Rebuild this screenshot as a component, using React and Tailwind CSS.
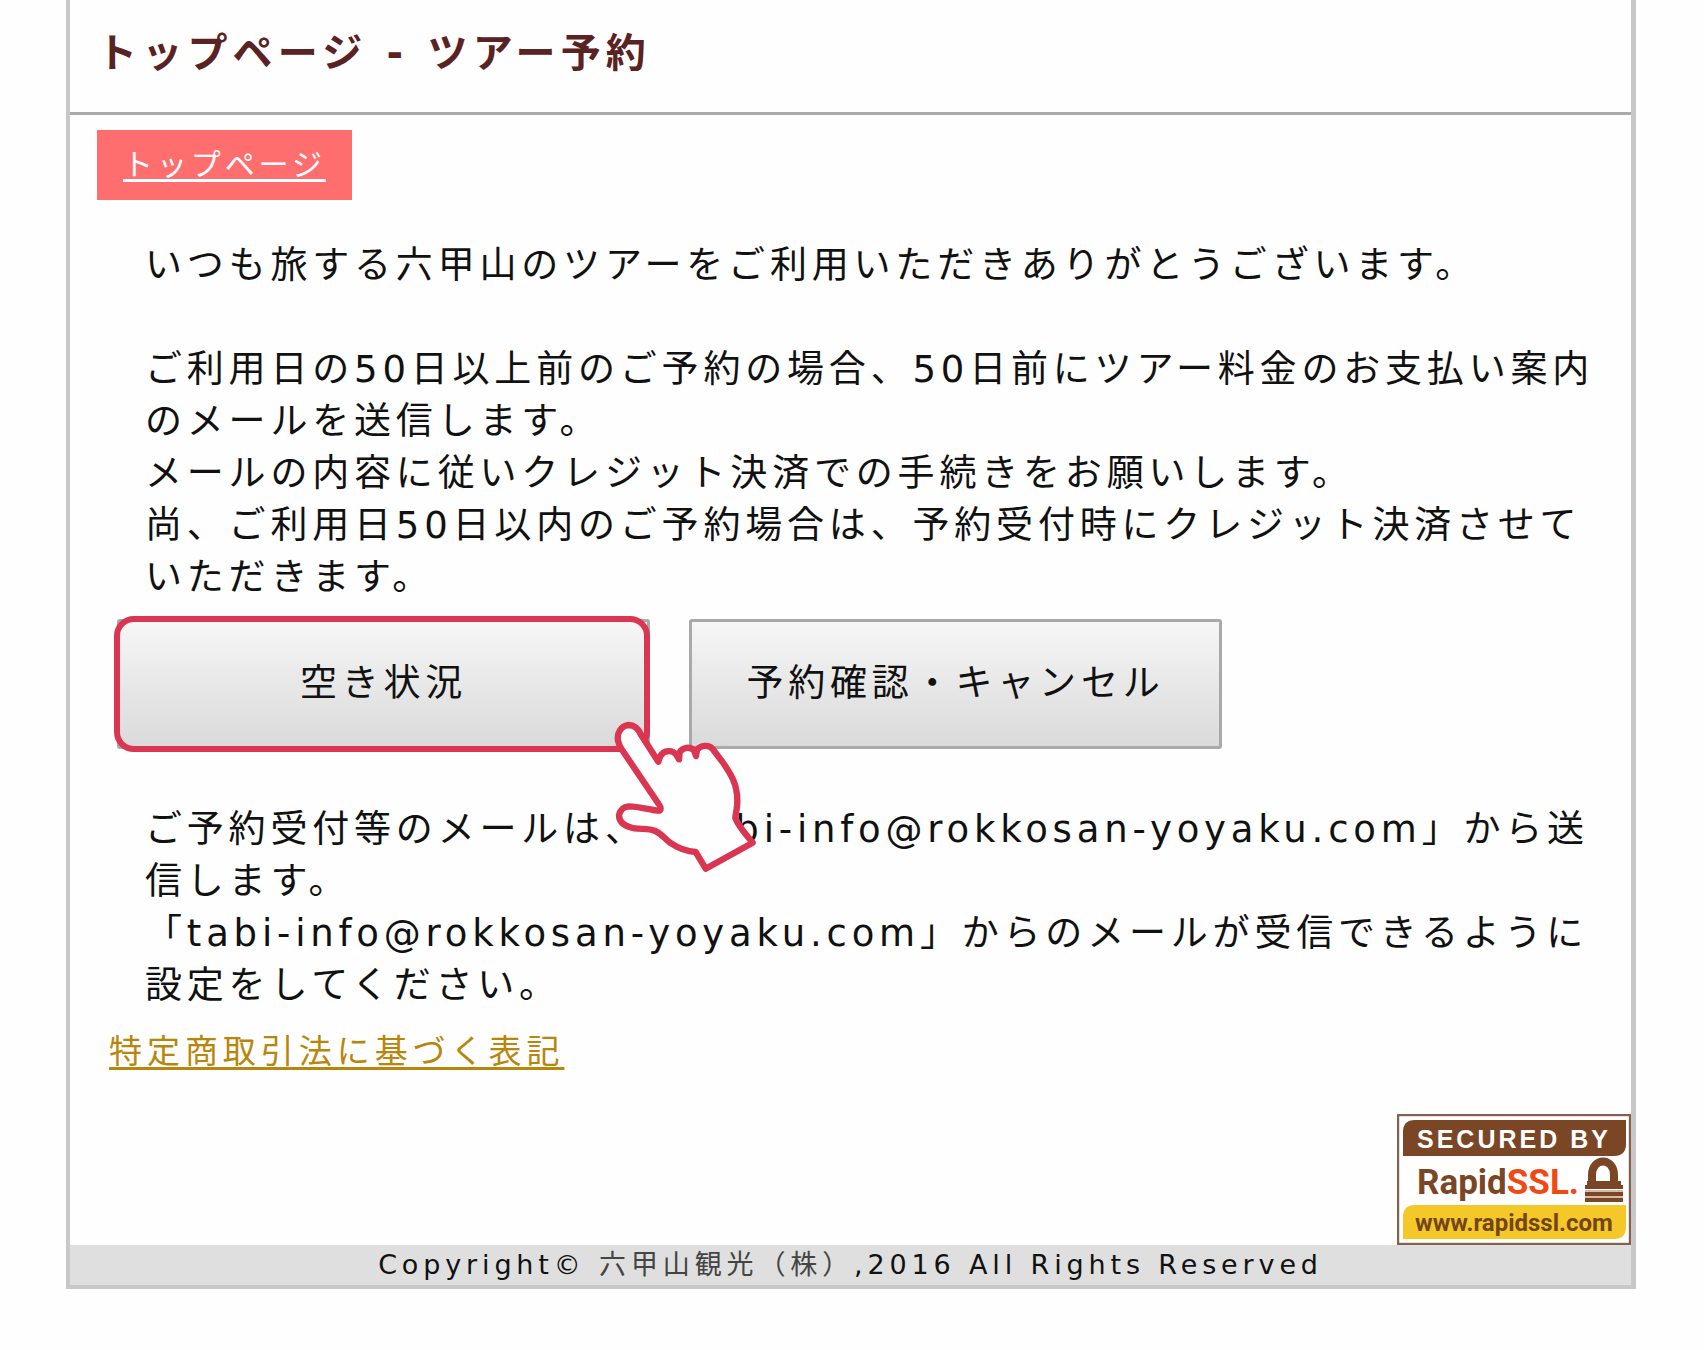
import React from 'react';

const intro = [
  'いつも旅する六甲山のツアーをご利用いただきありがとうございます。',
  '',
  'ご利用日の50日以上前のご予約の場合、50日前にツアー料金のお支払い案内',
  'のメールを送信します。',
  'メールの内容に従いクレジット決済での手続きをお願いします。',
  '尚、ご利用日50日以内のご予約場合は、予約受付時にクレジット決済させて',
  'いただきます。',
];

const mailNotice = [
  'ご予約受付等のメールは、「tabi-info@rokkosan-yoyaku.com」から送',
  '信します。',
  '「tabi-info@rokkosan-yoyaku.com」からのメールが受信できるように',
  '設定をしてください。',
];

const Lines = ({ lines }) => (
  <p className="pl-[75px] text-[37px] leading-[52px] tracking-[0.13em] whitespace-nowrap">
    {lines.map((line, i) => (
      <span key={i} className="block min-h-[52px]">{line}</span>
    ))}
  </p>
);

const MenuButton = ({ children }) => (
  <button
    type="button"
    className="h-[130px] w-full rounded-[3px] border-3 border-[#a9a9a9] bg-linear-to-b from-[#f6f6f6] to-[#dadada] text-[37px] tracking-[0.13em] whitespace-nowrap"
  >
    {children}
  </button>
);

const PointingHand = () => (
  <svg
    viewBox="0 0 600 570"
    className="pointer-events-none absolute top-[81px] left-[473px] z-10 h-[190px] w-[200px]"
    aria-hidden="true"
  >
    <path
      d="M205 185 L154 106 C144 84 131 75 116 75 C94 77 80 98 84 122 C86 132 90 141 95 148 L206 312 C214 323 215 333 202 332 C174 328 145 319 116 319 C101 320 91 329 87 345 C87 364 99 375 118 381 C145 391 172 382 196 393 C216 402 224 417 240 428 C262 443 285 455 317 456 L347 506 L488 428 C466 402 446 380 436 354 C436 340 442 331 442 302 C442 251 422 222 399 188 L368 147 C356 133 332 136 321 149 L318 168 L312 151 C301 139 277 141 269 157 L267 178 L259 164 C246 148 222 151 211 168 Z"
      fill="#fefefe"
      stroke="#da3551"
      strokeWidth="19"
      strokeLinejoin="round"
    />
  </svg>
);

const SslSeal = () => (
  <svg viewBox="0 0 234 131" className="h-[131px] w-[234px]" role="img" aria-label="Secured by RapidSSL">
    <rect x="1" y="1" width="232" height="129" fill="#fff" stroke="#85604e" strokeWidth="2.4" />
    <path d="M6 42V18Q6 6 18 6H229V30Q229 42 217 42Z" fill="#7a4626" />
    <path d="M6 125V103Q6 91 18 91H229V113Q229 125 217 125Z" fill="#f3c828" />
    <text x="20" y="34" fill="#fff" className="font-['Liberation_Sans',sans-serif] text-[25px] font-bold tracking-[3px]">
      SECURED BY
    </text>
    <text x="20" y="80" fill="#7a4626" className="font-[Roboto,sans-serif] text-[35px] font-bold">
      Rapid<tspan fill="#f04a14">SSL.</tspan>
    </text>
    <text x="18" y="117" fill="#74451c" className="font-[Roboto,sans-serif] text-[24px] font-bold">
      www.rapidssl.com
    </text>
    <path d="M195 68V61C195 43 217 43 217 61V68" fill="none" stroke="#7a4626" strokeWidth="8" />
    <path d="M190 67H224V71H226V75H188V71H190Z" fill="#7a4626" />
    <path d="M188 80H226M188 86H226" stroke="#7a4626" strokeWidth="4" />
    <path d="M188 77H226M188 83H226" stroke="#d3bcae" strokeWidth="2" />
  </svg>
);

export default function App() {
  return (
    <div className="min-h-screen bg-[#fefefe] pr-[68px] pb-[60px] pl-[66px] font-['DejaVu_Sans','Noto_Sans_CJK_JP',sans-serif] text-[#111] [text-spacing-trim:space-all]">
      <div className="border-4 border-t-0 border-r-5 border-[#c8c8c8]">
        <header className="border-b-3 border-[#aaaaaa] pt-[23px] pb-[29px] pl-[27px]">
          <h1 className="text-[40px] leading-[60px] font-bold tracking-[0.13em] text-[#5a2323]">
            トップページ - ツアー予約
          </h1>
        </header>

        <nav className="flex pt-[15px] pl-[27px]">
          <div className="bg-[#ff6e6e] px-[26px] text-[30px] leading-[70px] tracking-[0.13em] text-white">
            <a href="#top" className="underline decoration-3 underline-offset-4">トップページ</a>
          </div>
        </nav>

        <main>
          <div className="pt-10">
            <Lines lines={intro} />
          </div>

          <div className="mt-[15px] flex gap-[39px] pl-[47px]">
            <div className="relative w-[533px]">
              <MenuButton>空き状況</MenuButton>
              {/* highlight frame around the first button */}
              <div className="pointer-events-none absolute -inset-y-[3px] right-0 -left-[3px] rounded-[20px] border-6 border-[#da3551]" />
              <PointingHand />
            </div>
            <div className="w-[533px]">
              <MenuButton>予約確認・キャンセル</MenuButton>
            </div>
          </div>

          <div className="pt-[55px]">
            <Lines lines={mailNotice} />
          </div>

          <div className="mt-[15px] pl-[39px] text-[33px] leading-[50px] tracking-[0.15em]">
            <a href="#law" className="text-[#b8860b] underline decoration-3 underline-offset-4">
              特定商取引法に基づく表記
            </a>
          </div>

          <div className="mt-[37px] flex justify-end">
            <SslSeal />
          </div>
        </main>

        <footer className="bg-[#dfdfdf] text-center text-[27px] leading-10 tracking-[0.18em]">
          Copyright© <span className="text-[#444]">六甲山観光（株）</span>,2016 All Rights Reserved
        </footer>
      </div>
    </div>
  );
}
